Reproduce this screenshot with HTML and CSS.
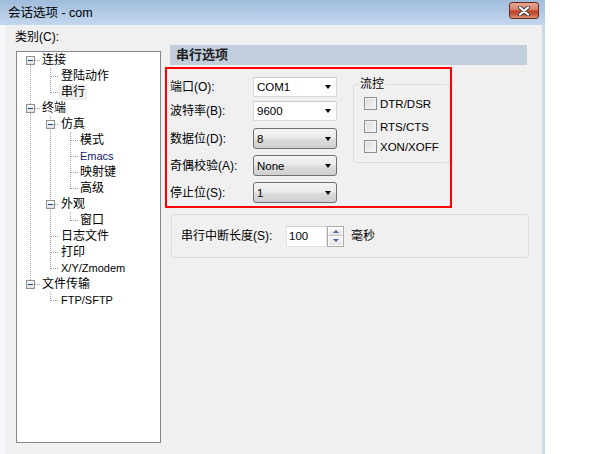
FILE: index.html
```html
<!DOCTYPE html>
<html lang="zh">
<head>
<meta charset="utf-8">
<title>会话选项 - com</title>
<link rel="stylesheet" href="styles.css">
</head>
<body>
<div class="window">
  <div class="titlebar">
    <span class="title">会话选项 - com</span>
    <div class="close">
      <svg width="14" height="10" viewBox="0 0 14 10">
        <path d="M3 1.5L11 8.5M11 1.5L3 8.5" stroke="#3f3f46" stroke-width="4" stroke-linecap="round"/>
        <path d="M3 1.5L11 8.5M11 1.5L3 8.5" stroke="#ffffff" stroke-width="2.2" stroke-linecap="round"/>
      </svg>
    </div>
  </div>
  <div class="client">
    <div class="left">
      <div class="cat-label">类别(C):</div>
      <div class="tree">
        <svg class="tree-lines" width="143" height="300" viewBox="0 0 143 300">
          <path d="M13.5 13V228 M18 8.5H24 M18 56.5H24 M18 232.5H24
                   M33.5 16V40.5 M34 24.5H42 M34 40.5H42
                   M33.5 64V216.5 M38 72.5H42 M38 152.5H42 M34 184.5H42 M34 200.5H42 M34 216.5H42
                   M33.5 240V248.5 M34 248.5H42
                   M53.5 80V136.5 M54 88.5H61 M54 104.5H61 M54 120.5H61 M54 136.5H61
                   M53.5 160V168.5 M54 168.5H61"
                stroke="#a0a0a0" stroke-width="1" stroke-dasharray="1 1" fill="none" shape-rendering="crispEdges"/>
        </svg>
        <div class="node l1"><span class="exp"></span><span class="txt">连接</span></div>
        <div class="node leaf2"><span class="txt">登陆动作</span></div>
        <div class="node leaf2"><span class="txt sel">串行</span></div>
        <div class="node l1"><span class="exp"></span><span class="txt">终端</span></div>
        <div class="node l2"><span class="exp"></span><span class="txt">仿真</span></div>
        <div class="node leaf3"><span class="txt">模式</span></div>
        <div class="node leaf3"><span class="txt latin navy">Emacs</span></div>
        <div class="node leaf3"><span class="txt">映射键</span></div>
        <div class="node leaf3"><span class="txt">高级</span></div>
        <div class="node l2"><span class="exp"></span><span class="txt">外观</span></div>
        <div class="node leaf3"><span class="txt">窗口</span></div>
        <div class="node leaf2"><span class="txt">日志文件</span></div>
        <div class="node leaf2"><span class="txt">打印</span></div>
        <div class="node leaf2"><span class="txt latin">X/Y/Zmodem</span></div>
        <div class="node l1"><span class="exp"></span><span class="txt">文件传输</span></div>
        <div class="node leaf2"><span class="txt latin">FTP/SFTP</span></div>
      </div>
    </div>
    <div class="right">
      <div class="band">串行选项</div>
      <div class="redbox">
        <div class="form">
          <div class="row r1"><span class="lbl">端口(O):</span><div class="combo edit"><span>COM1</span><i class="arrow"></i></div></div>
          <div class="row r2"><span class="lbl">波特率(B):</span><div class="combo edit"><span>9600</span><i class="arrow"></i></div></div>
          <div class="row r3"><span class="lbl">数据位(D):</span><div class="combo list"><span>8</span><i class="arrow"></i></div></div>
          <div class="row r4"><span class="lbl">奇偶校验(A):</span><div class="combo list"><span>None</span><i class="arrow"></i></div></div>
          <div class="row r5"><span class="lbl">停止位(S):</span><div class="combo list"><span>1</span><i class="arrow"></i></div></div>
        </div>
        <fieldset class="flow">
          <legend>流控</legend>
          <div class="check c1"><span class="box"></span><span>DTR/DSR</span></div>
          <div class="check c2"><span class="box"></span><span>RTS/CTS</span></div>
          <div class="check c3"><span class="box"></span><span>XON/XOFF</span></div>
        </fieldset>
      </div>
      <div class="breakbox">
        <span class="blbl">串行中断长度(S):</span>
        <div class="spin">
          <div class="spin-input">100</div>
          <div class="spin-btns">
            <div class="sbtn up"><i></i></div>
            <div class="sbtn down"><i></i></div>
          </div>
        </div>
        <span class="unit">毫秒</span>
      </div>
    </div>
  </div>
</div>
</body>
</html>
```
FILE: styles.css
```css
* { box-sizing: border-box; }

body {
  margin: 0;
  background: #ffffff;
  font-family: "Liberation Sans", "Noto Sans CJK SC", sans-serif;
  font-size: 12px;
  color: #000000;
}

.window {
  width: 545px;
  height: 454px;
  background: linear-gradient(to right, #f6f8fb 0, #f6f8fb 5px, #c9daee 5px);
  display: flex;
  flex-direction: column;
}

.titlebar {
  height: 25px;
  flex: none;
  background: linear-gradient(#a0bcdc, #c3d7ed);
  display: flex;
  align-items: flex-start;
  justify-content: space-between;
  padding: 2px 6px 0 8px;
}

.title {
  font-size: 12.5px;
  line-height: 22px;
  color: #000;
}

.close {
  width: 30px;
  height: 17px;
  border: 1px solid #6a2a24;
  border-radius: 3px;
  background: linear-gradient(#e8a897 0%, #d98068 45%, #c2462b 52%, #c85539 75%, #e0937a 100%);
  display: flex;
  align-items: center;
  justify-content: center;
}

.client {
  flex: 1;
  margin: 0 3px 0 5px;
  background: #f0f0f0;
  display: flex;
}

.left {
  width: 156px;
  padding-left: 11px;
  flex: none;
}

.cat-label {
  margin: 4px 0 0 -1px;
  height: 16px;
  line-height: 16px;
}

.tree {
  position: relative;
  margin-top: 6px;
  width: 145px;
  height: 392px;
  border: 1px solid #828790;
  background: #ffffff;
}

.tree-lines {
  position: absolute;
  left: 0;
  top: 0;
}

.node {
  position: relative;
  height: 16px;
  display: flex;
  align-items: center;
  line-height: 16px;
  white-space: nowrap;
}

.node.l1 { padding-left: 9px; }
.node.l2 { padding-left: 29px; }
.node.leaf2 { padding-left: 44px; }
.node.leaf3 { padding-left: 63px; }

.node.l1 .exp { margin-right: 7px; }
.node.l2 .exp { margin-right: 6px; }

.exp {
  position: relative;
  width: 9px;
  height: 9px;
  flex: none;
  border: 1px solid #8f8f8f;
  background: linear-gradient(#ffffff, #dedede);
}

.exp::after {
  content: "";
  position: absolute;
  left: 1px;
  top: 3px;
  width: 5px;
  height: 1px;
  background: #1e3f96;
}

.txt.latin {
  font-size: 11px;
}

.txt.navy {
  color: #14206a;
}

.txt.sel {
  background: #eeeeee;
  padding: 0 2px;
  margin-left: -2px;
}

.right {
  margin-left: 9px;
  margin-top: 20px;
  width: 357px;
  flex: none;
}

.band {
  height: 20px;
  line-height: 20px;
  background: #c1cfdc;
  padding-left: 6px;
  font-size: 13px;
  font-weight: bold;
  color: #222222;
}

.redbox {
  margin-top: 2px;
  margin-left: -5px;
  width: 287px;
  height: 141px;
  border: 2px solid #ff0000;
  display: flex;
}

.form {
  padding: 8px 0 0 3px;
  flex: none;
}

.row {
  display: flex;
  align-items: center;
}

.row.r1 { height: 20px; }
.row.r2 { height: 20px; margin-top: 4px; }
.row.r3 { height: 21px; margin-top: 7px; }
.row.r4 { height: 21px; margin-top: 6px; }
.row.r5 { height: 21px; margin-top: 6px; }

.lbl {
  width: 83px;
  flex: none;
  line-height: 16px;
}

.combo {
  width: 84px;
  height: 100%;
  display: flex;
  align-items: center;
  justify-content: space-between;
  padding: 0 5px 0 3px;
  font-size: 11.5px;
}

.combo.edit {
  background: #ffffff;
  border: 1px solid #d6dae0;
  border-top-color: #c9cdd3;
}

.combo.list {
  border: 1px solid #707070;
  border-radius: 3px;
  background: linear-gradient(#f3f3f3 0%, #ebebeb 48%, #dddddd 52%, #cfcfcf 100%);
}

.arrow {
  width: 0;
  height: 0;
  border-left: 3.5px solid transparent;
  border-right: 3.5px solid transparent;
  border-top: 4px solid #000000;
}

.flow {
  margin: 8px 0 0 16px;
  padding: 0 0 0 10px;
  width: 97px;
  height: 86px;
  border: 1px solid #d5dfe5;
  border-radius: 3px;
  flex: none;
  min-width: 0;
}

.flow legend {
  padding: 0 1px;
  margin-left: -5px;
  line-height: 14px;
  font-size: 12px;
}

.check {
  display: flex;
  align-items: center;
  height: 13px;
  font-size: 11.5px;
  white-space: nowrap;
}

.check.c1 { margin-top: 6px; }
.check.c2 { margin-top: 10px; }
.check.c3 { margin-top: 7px; }

.box {
  width: 13px;
  height: 13px;
  flex: none;
  margin-right: 3px;
  border: 1px solid #8e8f8f;
  background: linear-gradient(135deg, #dcdcdc, #f6f6f6);
  box-shadow: inset 0 0 0 1px #f4f4f4;
}

.breakbox {
  margin-top: 6px;
  margin-left: 1px;
  width: 358px;
  height: 44px;
  border: 1px solid #d5dfe5;
  border-radius: 3px;
  display: flex;
  align-items: center;
  padding-left: 9px;
}

.blbl {
  width: 105px;
  flex: none;
  line-height: 16px;
}

.spin {
  display: flex;
  height: 21px;
  width: 58px;
}

.spin-input {
  width: 41px;
  height: 21px;
  background: #ffffff;
  border: 1px solid #e2e3ea;
  border-top-color: #cfd1d8;
  padding-left: 2px;
  line-height: 19px;
  font-size: 11.5px;
}

.spin-btns {
  width: 17px;
  height: 21px;
  display: flex;
  flex-direction: column;
  border: 1px solid #acacac;
  background: #f4f4f4;
}

.sbtn {
  flex: 1;
  display: flex;
  align-items: center;
  justify-content: center;
  background: linear-gradient(#f7f7f7, #e3e3e3);
  border: 1px solid #ffffff;
}

.sbtn.up { border-bottom: 1px solid #c4c4c4; }

.sbtn.up i {
  width: 0;
  height: 0;
  border-left: 3px solid transparent;
  border-right: 3px solid transparent;
  border-bottom: 3px solid #4e6594;
}

.sbtn.down i {
  width: 0;
  height: 0;
  border-left: 3px solid transparent;
  border-right: 3px solid transparent;
  border-top: 3px solid #4e6594;
}

.unit {
  margin-left: 7px;
  line-height: 16px;
}
```
